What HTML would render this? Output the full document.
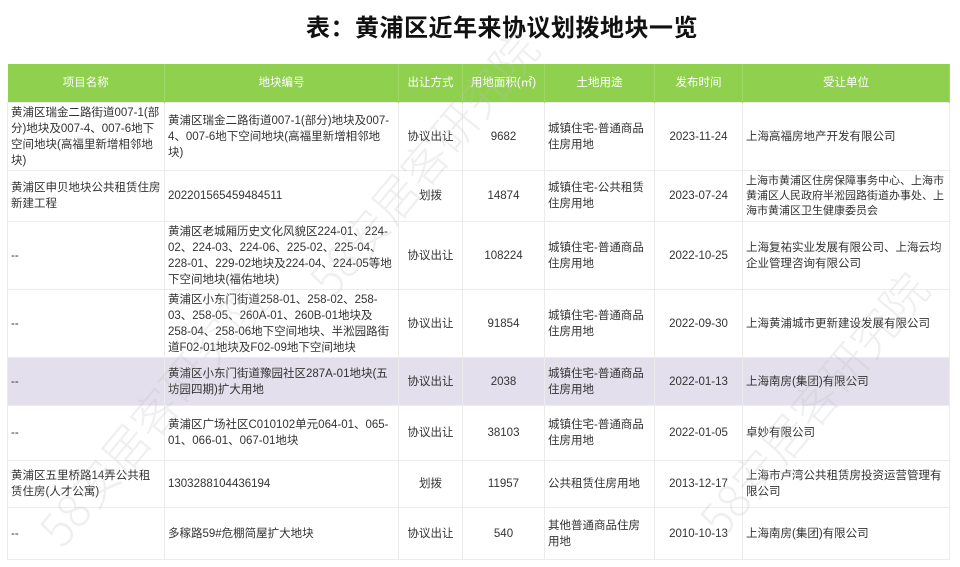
<!DOCTYPE html>
<html><head><meta charset="utf-8"><style>
body{margin:0;width:960px;height:567px;background:#fff;position:relative;overflow:hidden;font-family:"Liberation Sans","Noto Sans CJK SC",sans-serif;}
h1{position:absolute;left:0;width:1004px;top:13px;margin:0;text-align:center;font-size:24px;font-weight:bold;color:#111;line-height:32px;letter-spacing:0.5px}
table{position:absolute;left:7px;top:64px;border-collapse:collapse;table-layout:fixed;font-size:11.5px;color:#333;line-height:16px}
th{background:#8fd14f;color:#fff;font-weight:normal;height:36px;text-align:center;border-right:1px solid #9fd866}
td{border:1px solid #ececec;padding:0 3px;vertical-align:middle;overflow:hidden}
td.c{text-align:center}
tr.p td{background:#e3dfec}
.wm{position:absolute;color:rgba(190,190,190,0.25);font-size:46px;transform:rotate(-50deg);white-space:nowrap;font-family:"Noto Sans CJK SC",sans-serif;font-weight:300}
</style></head><body>
<h1>表：黄浦区近年来协议划拨地块一览</h1>
<table>
<colgroup><col style="width:157px"><col style="width:234px"><col style="width:64px"><col style="width:82px"><col style="width:110px"><col style="width:88px"><col style="width:207px"></colgroup>
<tr><th>项目名称</th><th>地块编号</th><th>出让方式</th><th>用地面积(㎡)</th><th>土地用途</th><th>发布时间</th><th>受让单位</th></tr>
<tr style="height:68px"><td>黄浦区瑞金二路街道007-1(部分)地块及007-4、007-6地下空间地块(高福里新增相邻地块)</td><td>黄浦区瑞金二路街道007-1(部分)地块及007-4、007-6地下空间地块(高福里新增相邻地块)</td><td class="c">协议出让</td><td class="c">9682</td><td>城镇住宅-普通商品住房用地</td><td class="c">2023-11-24</td><td>上海高福房地产开发有限公司</td></tr>
<tr style="height:51px"><td>黄浦区申贝地块公共租赁住房新建工程</td><td>202201565459484511</td><td class="c">划拨</td><td class="c">14874</td><td>城镇住宅-公共租赁住房用地</td><td class="c">2023-07-24</td><td style="font-size:11px;line-height:15px">上海市黄浦区住房保障事务中心、上海市黄浦区人民政府半淞园路街道办事处、上海市黄浦区卫生健康委员会</td></tr>
<tr style="height:68px"><td>--</td><td>黄浦区老城厢历史文化风貌区224-01、224-02、224-03、224-06、225-02、225-04、228-01、229-02地块及224-04、224-05等地下空间地块(福佑地块)</td><td class="c">协议出让</td><td class="c">108224</td><td>城镇住宅-普通商品住房用地</td><td class="c">2022-10-25</td><td>上海复祐实业发展有限公司、上海云均企业管理咨询有限公司</td></tr>
<tr style="height:68px"><td>--</td><td>黄浦区小东门街道258-01、258-02、258-03、258-05、260A-01、260B-01地块及258-04、258-06地下空间地块、半淞园路街道F02-01地块及F02-09地下空间地块</td><td class="c">协议出让</td><td class="c">91854</td><td>城镇住宅-普通商品住房用地</td><td class="c">2022-09-30</td><td>上海黄浦城市更新建设发展有限公司</td></tr>
<tr class="p" style="height:48px"><td>--</td><td>黄浦区小东门街道豫园社区287A-01地块(五坊园四期)扩大用地</td><td class="c">协议出让</td><td class="c">2038</td><td>城镇住宅-普通商品住房用地</td><td class="c">2022-01-13</td><td>上海南房(集团)有限公司</td></tr>
<tr style="height:55px"><td>--</td><td>黄浦区广场社区C010102单元064-01、065-01、066-01、067-01地块</td><td class="c">协议出让</td><td class="c">38103</td><td>城镇住宅-普通商品住房用地</td><td class="c">2022-01-05</td><td>卓妙有限公司</td></tr>
<tr style="height:47px"><td>黄浦区五里桥路14弄公共租赁住房(人才公寓)</td><td>1303288104436194</td><td class="c">划拨</td><td class="c">11957</td><td>公共租赁住房用地</td><td class="c">2013-12-17</td><td>上海市卢湾公共租赁房投资运营管理有限公司</td></tr>
<tr style="height:52px"><td>--</td><td>多稼路59#危棚简屋扩大地块</td><td class="c">协议出让</td><td class="c">540</td><td>其他普通商品住房用地</td><td class="c">2010-10-13</td><td>上海南房(集团)有限公司</td></tr>
</table>
<div class="wm" style="left:260px;top:130px">58安居客研究院</div>
<div class="wm" style="left:-10px;top:380px">58安居客研究院</div>
<div class="wm" style="left:650px;top:370px">58安居客研究院</div>
</body></html>
